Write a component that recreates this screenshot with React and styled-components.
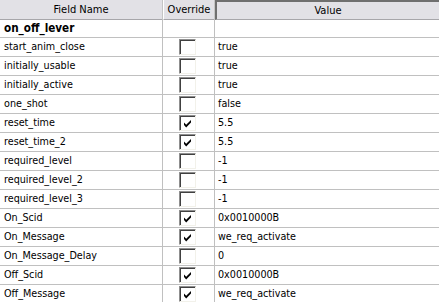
import React from "react";
import styled, { createGlobalStyle } from "styled-components";

const Global = createGlobalStyle`
  html, body { margin: 0; padding: 0; background: #ffffff; overflow: hidden; }
  body { font-family: "DejaVu Sans Condensed", "DejaVu Sans", sans-serif; font-size: 11px; color: #000; }
`;

const Grid = styled.div`
  display: grid;
  grid-template-columns: 163px 52px 224px;
  grid-auto-rows: 19px;
  width: 439px;
`;

const HeadCell = styled.div`
  box-sizing: border-box;
  height: 20px;
  display: flex;
  align-items: center;
  justify-content: center;
  font-size: 11px;
  background: #e2e1e6;
  border-bottom: 1px solid #a7a6aa;
  border-right: 1px solid #c5c5c5;
  border-left: 1px solid #ffffff;
  padding-bottom: 1px;
  ${(p) =>
    p.$sunken &&
    `
    border-left: 2px solid #6f6f6f;
    border-top: 2px solid #6f6f6f;
    border-right: none;
    padding-bottom: 0;
  `}
  ${(p) => p.$first && `border-left: none;`}
`;

const Cell = styled.div`
  box-sizing: border-box;
  height: 19px;
  display: flex;
  align-items: center;
  padding-left: ${(p) => (p.$pad != null ? p.$pad : 4)}px;
  padding-bottom: 1px;
  border-bottom: 1px solid #c0c0c0;
  border-right: 1px solid #c0c0c0;
  font-weight: ${(p) => (p.$bold ? "bold" : "normal")};
  font-size: ${(p) => (p.$bold ? "11.6px" : "10.7px")};
  white-space: nowrap;
  overflow: hidden;
  ${(p) => p.$center && `justify-content: center; padding-left: 0; align-items: flex-start; padding-top: 1px; padding-bottom: 0;`}
  ${(p) => p.$last && `border-right: none;`}
`;

const Box = styled.div`
  box-sizing: border-box;
  width: 17px;
  height: 16px;
  margin-left: -2px;
  background: #ffffff;
  border-top: 1px solid #8f8f8f;
  border-left: 1px solid #8f8f8f;
  border-right: 1px solid #f2f1ea;
  border-bottom: 1px solid #f2f1ea;
  box-shadow: inset 1px 1px 0 #404040;
  position: relative;
`;

const Check = () => (
  <svg width="10" height="10" viewBox="0 0 10 10" style={{ position: "absolute", left: 3, top: 3 }}>
    <path d="M1 3.5 L3.2 5.8 L8 1 L8 3.6 L3.2 8.4 L1 6.1 Z" fill="#000" />
  </svg>
);

const rows = [
  ["start_anim_close", false, "true"],
  ["initially_usable", false, "true"],
  ["initially_active", false, "true"],
  ["one_shot", false, "false"],
  ["reset_time", true, "5.5"],
  ["reset_time_2", true, "5.5"],
  ["required_level", false, "-1"],
  ["required_level_2", false, "-1"],
  ["required_level_3", false, "-1"],
  ["On_Scid", true, "0x0010000B"],
  ["On_Message", true, "we_req_activate"],
  ["On_Message_Delay", false, "0"],
  ["Off_Scid", true, "0x0010000B"],
  ["Off_Message", true, "we_req_activate"],
];

export default function App() {
  return (
    <>
      <Global />
      <Grid>
        <HeadCell $first>Field Name</HeadCell>
        <HeadCell>Override</HeadCell>
        <HeadCell $sunken>Value</HeadCell>

        <Cell $bold>on_off_lever</Cell>
        <Cell />
        <Cell $last />

        {rows.map(([name, on, val]) => (
          <React.Fragment key={name}>
            <Cell>{name}</Cell>
            <Cell $center>
              <Box>{on && <Check />}</Box>
            </Cell>
            <Cell $last $pad={3}>{val}</Cell>
          </React.Fragment>
        ))}
      </Grid>
    </>
  );
}
